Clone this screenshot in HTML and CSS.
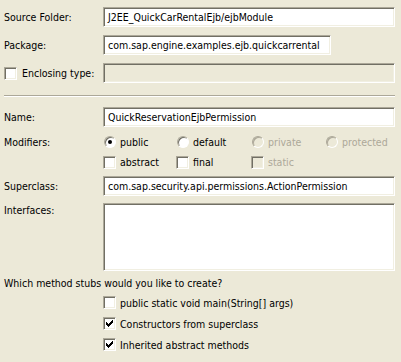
FILE: index.html
```html
<!DOCTYPE html>
<html>
<head>
	<title>New Java Class</title>
	<link rel="stylesheet" href="styles.css">
</head>
<body>
	<div class="page">
		<div class="row">
			<div class="label">Source Folder:</div>
			<div class="field">J2EE_QuickCarRentalEjb/ejbModule</div>
		</div>
		<div class="row package">
			<div class="label">Package:</div>
			<div class="field short">com.sap.engine.examples.ejb.quickcarrental</div>
		</div>
		<div class="row enclosing">
			<div class="label check-label"><span class="box"></span>Enclosing type:</div>
			<div class="field disabled"></div>
		</div>

		<div class="separator"></div>

		<div class="row">
			<div class="label">Name:</div>
			<div class="field">QuickReservationEjbPermission</div>
		</div>
		<div class="row modifiers">
			<div class="label">Modifiers:</div>
			<div class="options">
				<div class="opt"><span class="radio on"></span>public</div>
				<div class="opt"><span class="radio"></span>default</div>
				<div class="opt off"><span class="radio"></span>private</div>
				<div class="opt off"><span class="radio"></span>protected</div>
			</div>
		</div>
		<div class="row">
			<div class="label"></div>
			<div class="options">
				<div class="opt"><span class="box"></span>abstract</div>
				<div class="opt"><span class="box"></span>final</div>
				<div class="opt off"><span class="box"></span>static</div>
			</div>
		</div>
		<div class="row superclass">
			<div class="label">Superclass:</div>
			<div class="field">com.sap.security.api.permissions.ActionPermission</div>
		</div>
		<div class="row interfaces">
			<div class="label">Interfaces:</div>
			<div class="field list"></div>
		</div>

		<div class="question">Which method stubs would you like to create?</div>
		<div class="stubs">
			<div class="opt"><span class="box"></span>public static void main(String[] args)</div>
			<div class="opt"><span class="box"><svg class="check" width="7" height="7" viewBox="0 0 7 7"><path d="M0 2h1v3H0zM1 3h1v3H1zM2 4h1v3H2zM3 3h1v3H3zM4 2h1v3H4zM5 1h1v3H5zM6 0h1v3H6z"/></svg></span>Constructors from superclass</div>
			<div class="opt"><span class="box"><svg class="check" width="7" height="7" viewBox="0 0 7 7"><path d="M0 2h1v3H0zM1 3h1v3H1zM2 4h1v3H2zM3 3h1v3H3zM4 2h1v3H4zM5 1h1v3H5zM6 0h1v3H6z"/></svg></span>Inherited abstract methods</div>
		</div>
	</div>
</body>
</html>
```

FILE: styles.css
```css
body {
	margin: 0;
	background-color: #ece9d8;
	font-family: 'DejaVu Sans Condensed', 'Liberation Sans', sans-serif;
	font-size: 10.5px;
	color: #000;
}

.page {
	padding: 7px 6px 0 4px;
}

.row {
	display: flex;
	align-items: center;
	height: 20px;
}

.package,
.enclosing {
	margin-top: 8px;
}

.label {
	width: 99px;
	flex-shrink: 0;
	display: flex;
	align-items: center;
}

.check-label .box {
	margin-right: 5px;
}

.field {
	flex: 1;
	height: 20px;
	box-sizing: border-box;
	border: 1px solid;
	border-color: #aca899 #fff #fff #aca899;
	box-shadow: inset 1px 1px #716f64, inset -1px -1px #f1efe2;
	background-color: #fff;
	padding: 0 4px;
	line-height: 18px;
	white-space: nowrap;
	overflow: hidden;
}

.field.short {
	flex: 0 0 228px;
}

.field.disabled {
	background-color: #ece9d8;
}

.separator {
	height: 1px;
	border-top: 1px solid #aca899;
	background-color: #fff;
	margin: 12px 0 10px 0;
}

.modifiers {
	margin-top: 5px;
}

.superclass {
	margin-top: 4px;
}

.interfaces {
	align-items: flex-start;
	height: 68px;
	margin-top: 7px;
}

.interfaces .label {
	margin-top: 1px;
}

.field.list {
	height: 68px;
}

.options {
	display: grid;
	grid-template-columns: 73px 75px 74px auto;
}

.opt {
	display: flex;
	align-items: center;
	height: 20px;
}

.opt.off {
	color: #aca899;
}

.radio {
	position: relative;
	width: 12px;
	height: 12px;
	box-sizing: border-box;
	border-radius: 50%;
	border: 1px solid;
	border-color: #aca899 #fff #fff #aca899;
	box-shadow: inset 1px 1px #716f64;
	background-color: #fff;
	margin: 0 4px 0 1px;
}

.opt.off .radio {
	background-color: #ece9d8;
	box-shadow: inset 1px 1px #aca899;
}

.radio.on::after {
	content: '';
	position: absolute;
	left: 3px;
	top: 3px;
	width: 4px;
	height: 4px;
	border-radius: 50%;
	background-color: #000;
}

.box {
	display: flex;
	align-items: center;
	justify-content: center;
	width: 13px;
	height: 13px;
	box-sizing: border-box;
	border: 1px solid;
	border-color: #aca899 #fff #fff #aca899;
	box-shadow: inset 1px 1px #716f64, inset -1px -1px #f1efe2;
	background-color: #fff;
	margin-right: 4px;
}

.opt.off .box {
	background-color: #ece9d8;
}

.check {
	fill: #000;
	shape-rendering: crispEdges;
}

.question {
	height: 16px;
	line-height: 16px;
	margin-top: 4px;
}

.stubs {
	padding-left: 99px;
	margin-top: 1px;
}

.stubs .opt {
	height: 21px;
}
```
